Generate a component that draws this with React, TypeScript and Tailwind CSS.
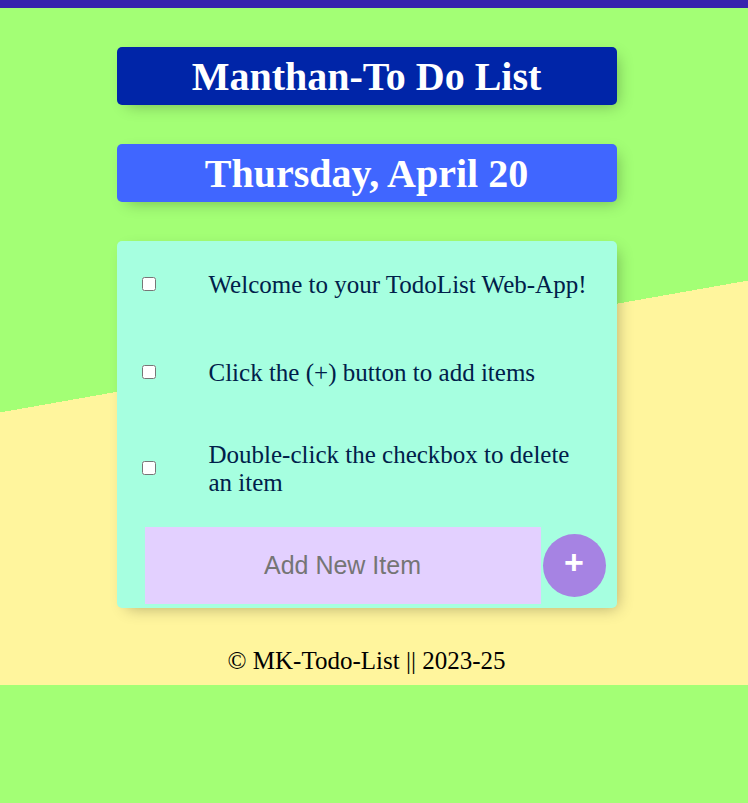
import { useState } from "react"

const initialItems = [
  "Welcome to your TodoList Web-App!",
  "Click the (+) button to add items",
  "Double-click the checkbox to delete an item",
]

export default function App() {
  const [items, setItems] = useState(initialItems)
  const [text, setText] = useState("")

  const addItem = (e: React.FormEvent) => {
    e.preventDefault()
    if (!text.trim()) return
    setItems([...items, text.trim()])
    setText("")
  }

  return (
    <div className="min-h-screen bg-[#a3ff75] border-t-8 border-[#3724ad] font-['Liberation_Serif',serif]">
      {/* gradient section, repeats green below */}
      <div className="bg-[linear-gradient(170deg,#a3ff75_50%,#fff59d_50%)] pt-[39px] pb-[10px] pr-[15px]">
        <div className="mx-auto w-[500px] flex flex-col gap-[39px]">
          <div className="h-[58px] rounded-[5px] bg-[#0025a8] flex items-center justify-center shadow-[5px_5px_15px_-5px_rgba(0,0,0,0.3)]">
            <h1 className="text-[40px] font-bold text-white leading-none pt-[2px]">Manthan-To Do List</h1>
          </div>
          <div className="h-[58px] rounded-[5px] bg-[#4066ff] flex items-center justify-center shadow-[5px_5px_15px_-5px_rgba(0,0,0,0.3)]">
            <h1 className="text-[40px] font-bold text-white leading-none pt-[2px]">Thursday, April 20</h1>
          </div>

          <div className="rounded-[5px] bg-[#a6ffe0] pb-[4px] shadow-[5px_5px_15px_-5px_rgba(0,0,0,0.3)]">
            {items.map((item, i) => (
              <div key={i} className="min-h-[88px] flex items-center">
                <input
                  type="checkbox"
                  onDoubleClick={() => setItems(items.filter((_, j) => j !== i))}
                  className="ml-[25px] m-0 w-[14px] h-[14px] shrink-0 -translate-y-[1px]"
                />
                <p className="flex-1 pl-[53px] pr-[24px] py-[24px] text-[25px] leading-[28px] text-[#00204a]">{item}</p>
              </div>
            ))}

            <form onSubmit={addItem} className="mt-[6px] flex items-center">
              <input
                type="text"
                value={text}
                onChange={(e) => setText(e.target.value)}
                placeholder="Add New Item"
                className="ml-[28px] w-[396px] h-[77px] bg-[#e3d0ff] text-center text-[25px] font-['Liberation_Sans',Arial,sans-serif] text-[#00204a] placeholder:text-[#757575] outline-none"
              />
              <button
                type="submit"
                className="ml-[2px] w-[63px] h-[63px] rounded-full bg-[#a683e3] text-white text-[34px] font-bold leading-none pb-[8px] font-['Liberation_Sans',Arial,sans-serif] flex items-center justify-center"
              >
                +
              </button>
            </form>
          </div>
        </div>

        <footer className="mt-[39px] text-center text-[25px] leading-[28px] text-black">
          © MK-Todo-List || 2023-25
        </footer>
      </div>
    </div>
  )
}
